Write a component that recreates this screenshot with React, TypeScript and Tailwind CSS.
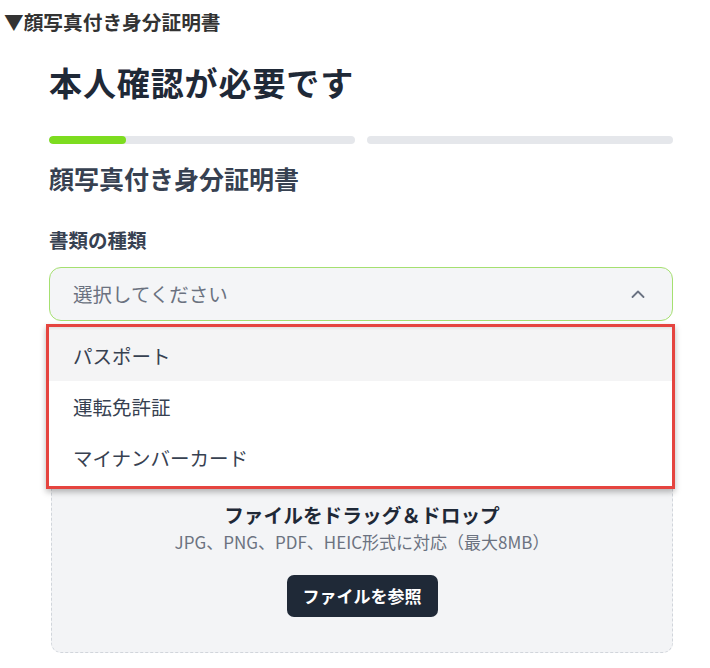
import React, { useState } from 'react';

const OPTIONS = ['パスポート', '運転免許証', 'マイナンバーカード'];

const ChevronUp: React.FC = () => (
  <svg width="14" height="8" viewBox="0 0 14 8" fill="none" className="text-gray-500">
    <path d="M1.5 7 7 1.5 12.5 7" stroke="currentColor" strokeWidth="1.8" strokeLinecap="round" strokeLinejoin="round" />
  </svg>
);

export default function App() {
  const [open] = useState(true);
  const [hovered, setHovered] = useState(0);

  return (
    <div
      className="w-[710px] h-[668px] bg-white overflow-hidden"
      style={{ fontFamily: '"Noto Sans CJK JP", "Noto Sans", sans-serif' }}
    >
      {/* Section label */}
      <div className="pl-[4px] pt-[9px] text-[19.7px] leading-[26px] font-bold text-[#333333]">
        ▼顔写真付き身分証明書
      </div>

      <div className="ml-[49px] w-[624px]">
        <h1 className="mt-[25px] text-[33px] leading-[44px] font-bold text-[#1f2937] tracking-[0.9px]">
          本人確認が必要です
        </h1>

        {/* Progress steps */}
        <div className="mt-[32px] flex gap-3">
          <div className="flex-1 h-[8px] rounded-full bg-[#e5e7eb] overflow-hidden">
            <div className="h-full w-1/4 rounded-full bg-[#7ddc1f]" />
          </div>
          <div className="flex-1 h-[8px] rounded-full bg-[#e5e7eb]" />
        </div>

        <h2 className="mt-[17px] text-[25px] leading-[34px] font-bold text-[#374151]">
          顔写真付き身分証明書
        </h2>

        <div className="mt-[32px] text-[19.5px] leading-[26px] font-semibold text-[#374151]">
          書類の種類
        </div>

        {/* Select */}
        <div className="relative mt-[14px]">
          <button className="w-full h-[54px] flex items-center justify-between pl-[23px] pr-[27px] rounded-[12px] border border-[#a5e070] bg-[#f4f5f7] text-[19.5px] text-[#6b7280]">
            <span>選択してください</span>
            <ChevronUp />
          </button>

          {open && (
            <div className="absolute left-[-3px] top-[57px] w-[629px] z-10 border-[3px] border-[#e5443f] bg-white shadow-[0_3px_6px_rgba(0,0,0,0.28)]">
              <ul className="py-[3px] shadow-[inset_0_5px_5px_-3px_rgba(0,0,0,0.14)]">
                {OPTIONS.map((opt, i) => (
                  <li
                    key={opt}
                    onMouseEnter={() => setHovered(i)}
                    className={`h-[51px] flex items-center pl-[24px] text-[19.5px] text-[#374151] ${
                      hovered === i ? 'bg-[#f4f4f5]' : 'bg-white'
                    }`}
                  >
                    {opt}
                  </li>
                ))}
              </ul>
            </div>
          )}
        </div>

        {/* Dropzone */}
        <div className="mt-[20px] ml-[2px] rounded-[10px] border border-dashed border-[#d1d5db] bg-[#f3f4f6] pt-[160px] pb-[35px] flex flex-col items-center">
          <div className="text-[19.7px] leading-[26px] font-bold text-[#1f2937]">
            ファイルをドラッグ＆ドロップ
          </div>
          <div className="mt-[1px] text-[17px] leading-[26px] text-[#6b7280]">
            JPG、PNG、PDF、HEIC形式に対応（最大8MB）
          </div>
          <button className="mt-[20px] h-[42px] w-[151px] rounded-[7px] bg-[#1f2937] text-white text-[17px] font-bold">
            ファイルを参照
          </button>
        </div>
      </div>
    </div>
  );
}
